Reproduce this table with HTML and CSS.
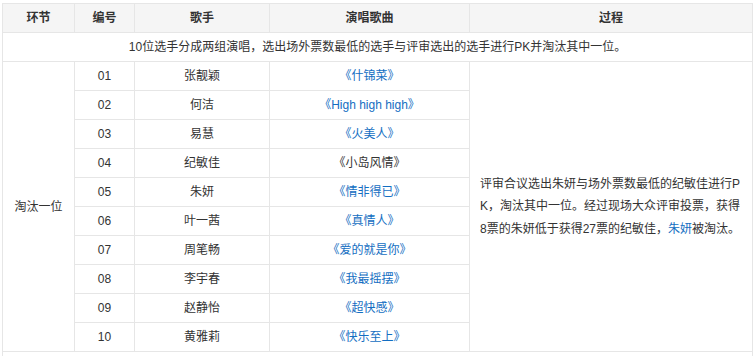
FILE: index.html
```html
<!DOCTYPE html>
<html lang="zh-CN">
<head>
<meta charset="utf-8">
<link rel="stylesheet" href="styles.css">
</head>
<body>
<div class="wrap">
<table class="tbl">
<colgroup>
<col class="c1"><col class="c2"><col class="c3"><col class="c4"><col class="c5">
</colgroup>
<thead>
<tr><th>环节</th><th>编号</th><th>歌手</th><th>演唱歌曲</th><th>过程</th></tr>
</thead>
<tbody>
<tr><td colspan="5">10位选手分成两组演唱，选出场外票数最低的选手与评审选出的选手进行PK并淘汰其中一位。</td></tr>
<tr><td rowspan="10">淘汰一位</td><td>01</td><td>张靓颖</td><td><a>《什锦菜》</a></td><td rowspan="10" class="proc">评审合议选出朱妍与场外票数最低的纪敏佳进行PK，淘汰其中一位。经过现场大众评审投票，获得8票的朱妍低于获得27票的纪敏佳，<a>朱妍</a>被淘汰。</td></tr>
<tr><td>02</td><td>何洁</td><td><a>《High high high》</a></td></tr>
<tr><td>03</td><td>易慧</td><td><a>《火美人》</a></td></tr>
<tr><td>04</td><td>纪敏佳</td><td>《小岛风情》</td></tr>
<tr><td>05</td><td>朱妍</td><td><a>《情非得已》</a></td></tr>
<tr><td>06</td><td>叶一茜</td><td><a>《真情人》</a></td></tr>
<tr><td>07</td><td>周笔畅</td><td><a>《爱的就是你》</a></td></tr>
<tr><td>08</td><td>李宇春</td><td><a>《我最摇摆》</a></td></tr>
<tr><td>09</td><td>赵静怡</td><td><a>《超快感》</a></td></tr>
<tr><td>10</td><td>黄雅莉</td><td><a>《快乐至上》</a></td></tr>
<tr><td colspan="5">&nbsp;</td></tr>
</tbody>
</table>
</div>
</body>
</html>
```
FILE: styles.css
```css
html, body {
  margin: 0;
  padding: 0;
  background: #fff;
}
.wrap {
  padding: 3px 0 0 2px;
}
.tbl {
  border-collapse: collapse;
  table-layout: fixed;
  width: 750px;
  font-family: "Liberation Sans", "Noto Sans CJK SC", sans-serif;
  font-size: 12px;
  color: #333;
}
.c1 { width: 72px; }
.c2 { width: 60px; }
.c3 { width: 135px; }
.c4 { width: 200px; }
.c5 { width: 283px; }
.tbl th, .tbl td {
  border: 1px solid #e6e6e6;
  height: 29px;
  padding: 0 8px;
  text-align: center;
  vertical-align: middle;
  line-height: 18px;
  box-sizing: border-box;
}
.tbl th {
  background: #f5f5f5;
  font-weight: bold;
}
.tbl td.proc {
  text-align: left;
  padding: 0 10px;
  line-height: 22.5px;
  word-break: break-all;
}
.tbl a {
  color: #136ec2;
  text-decoration: none;
}
```
